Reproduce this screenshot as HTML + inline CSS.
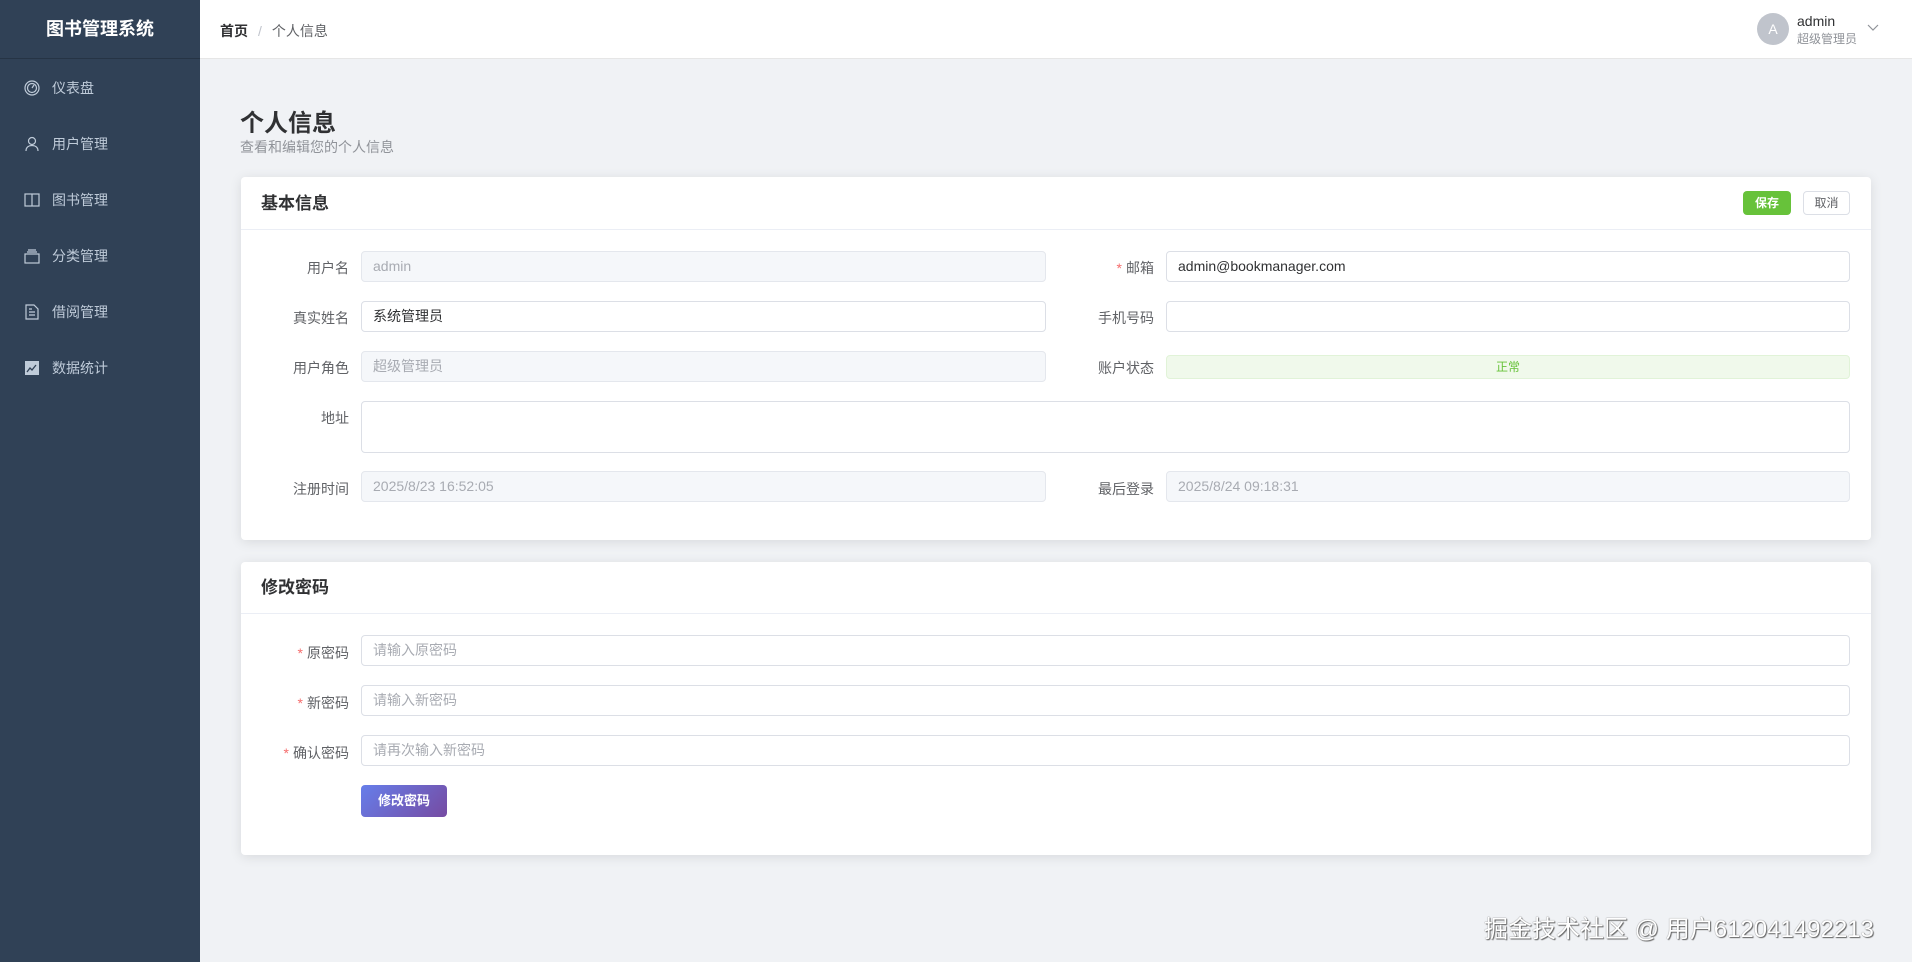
<!DOCTYPE html>
<html><head><meta charset="utf-8"><style>
*{box-sizing:border-box;margin:0;padding:0}
body{width:1912px;height:962px;overflow:hidden;background:#f0f2f5;font-family:"Liberation Sans","Noto Sans CJK SC",sans-serif;position:relative;color:#303133}
.side{position:absolute;left:0;top:0;width:200px;height:962px;background:#304156}
.logo{height:59px;border-bottom:1px solid #263445;color:#fff;font-weight:bold;font-size:18px;text-align:center;line-height:59px}
.mi{position:absolute;left:0;width:200px;height:56px;color:#bfcbd9;font-size:14px;line-height:56px;padding-left:52px}
.mi svg{position:absolute;left:24px;top:20px}
.hdr{position:absolute;left:200px;top:0;right:0;height:59px;background:#fff;border-bottom:1px solid #e6e6e6}
.bc{position:absolute;left:20px;top:21px;font-size:14px;color:#606266}
.bc b{color:#303133}
.av{position:absolute;left:1757px;top:13px;width:32px;height:32px;border-radius:50%;background:#c0c4cc;color:#fff;text-align:center;line-height:32px;font-size:14px}
.abs{position:absolute}
.card{position:absolute;left:241px;width:1630px;background:#fff;border-radius:4px;box-shadow:0 2px 12px rgba(0,0,0,.1)}
.ch{height:53px;border-bottom:1px solid #ebeef5;padding-left:20px;line-height:53px;font-size:17px;font-weight:bold;color:#303133}
.lbl{position:absolute;font-size:14px;color:#606266;text-align:right;width:120px}
.lbl i{color:#f56c6c;font-style:normal;margin-right:4px}
.inp{position:absolute;height:31px;border:1px solid #dcdfe6;border-radius:4px;background:#fff;font-size:14px;line-height:29px;padding-left:11px;color:#606266}
.dis{background:#f5f7fa;border-color:#e4e7ed;color:#a8abb2}
.ph{color:#a8abb2}
</style></head><body>
<div class="side">
<div class="logo">图书管理系统</div>
<div class="mi" style="top:60px"><svg width="16" height="16" viewBox="0 0 16 16" fill="none" stroke="#bfcbd9" stroke-width="1.2"><circle cx="8" cy="8" r="7"/><circle cx="8" cy="8" r="4.5"/><path d="M8 8 L10 5"/></svg>仪表盘</div>
<div class="mi" style="top:116px"><svg width="16" height="16" viewBox="0 0 16 16" fill="none" stroke="#bfcbd9" stroke-width="1.2"><circle cx="8" cy="5" r="3.5"/><path d="M2 15c0-4 3-5.5 6-5.5s6 1.5 6 5.5"/></svg>用户管理</div>
<div class="mi" style="top:172px"><svg width="16" height="16" viewBox="0 0 16 16" fill="none" stroke="#bfcbd9" stroke-width="1.2"><rect x="1" y="2" width="14" height="12"/><path d="M8 2v12"/></svg>图书管理</div>
<div class="mi" style="top:228px"><svg width="16" height="16" viewBox="0 0 16 16" fill="none" stroke="#bfcbd9" stroke-width="1.2"><rect x="1" y="6" width="14" height="9"/><path d="M3 4h10M4 2h8"/></svg>分类管理</div>
<div class="mi" style="top:284px"><svg width="16" height="16" viewBox="0 0 16 16" fill="none" stroke="#bfcbd9" stroke-width="1.2"><path d="M2 1h8l4 4v10H2z"/><path d="M5 8h6M5 11h6M5 5h3"/></svg>借阅管理</div>
<div class="mi" style="top:340px"><svg width="16" height="16" viewBox="0 0 16 16"><rect x="1" y="1" width="14" height="14" fill="#bfcbd9"/><path d="M3 12l3-4 2 2 4-5" stroke="#304156" stroke-width="1.3" fill="none"/></svg>数据统计</div>
</div>
<div class="hdr">
<div class="bc"><b>首页</b><span style="color:#c0c4cc;margin:0 10px">/</span>个人信息</div>
<div class="av" style="left:1557px">A</div>
<div class="abs" style="left:1597px;top:13px;font-size:14px;color:#303133">admin</div>
<div class="abs" style="left:1597px;top:30px;font-size:12px;color:#909399">超级管理员</div>
<svg class="abs" style="left:1667px;top:24px" width="12" height="8" viewBox="0 0 12 8"><path d="M1 1l5 5 5-5" stroke="#909399" fill="none" stroke-width="1.2"/></svg>
</div>
<div class="abs" style="left:240px;top:103px;font-size:24px;font-weight:bold;color:#303133">个人信息</div>
<div class="abs" style="left:240px;top:137px;font-size:14px;color:#909399">查看和编辑您的个人信息</div>

<div class="card" style="top:177px;height:363px">
<div class="ch">基本信息</div>
<div class="abs" style="left:1502px;top:14px;width:48px;height:24px;background:#67c23a;border-radius:4px;color:#fff;font-size:12px;font-weight:bold;text-align:center;line-height:24px">保存</div>
<div class="abs" style="left:1562px;top:14px;width:47px;height:24px;border:1px solid #dcdfe6;border-radius:4px;color:#606266;font-size:12px;text-align:center;line-height:22px">取消</div>
</div>
<div class="lbl" style="left:229px;top:258px">用户名</div>
<div class="inp dis" style="left:361px;top:251px;width:685px">admin</div>
<div class="lbl" style="left:229px;top:308px">真实姓名</div>
<div class="inp" style="left:361px;top:301px;width:685px;color:#303133">系统管理员</div>
<div class="lbl" style="left:229px;top:358px">用户角色</div>
<div class="inp dis" style="left:361px;top:351px;width:685px">超级管理员</div>
<div class="lbl" style="left:229px;top:408px">地址</div>
<div class="inp" style="left:361px;top:401px;width:1489px;height:52px"></div>
<div class="lbl" style="left:229px;top:479px">注册时间</div>
<div class="inp dis" style="left:361px;top:471px;width:685px">2025/8/23 16:52:05</div>
<div class="lbl" style="left:1034px;top:258px"><i>*</i>邮箱</div>
<div class="inp" style="left:1166px;top:251px;width:684px;color:#303133">admin@bookmanager.com</div>
<div class="lbl" style="left:1034px;top:308px">手机号码</div>
<div class="inp" style="left:1166px;top:301px;width:684px"></div>
<div class="lbl" style="left:1034px;top:358px">账户状态</div>
<div class="abs" style="left:1166px;top:355px;width:684px;height:24px;background:#f0f9eb;border:1px solid #e1f3d8;border-radius:4px;color:#67c23a;font-size:12px;text-align:center;line-height:22px">正常</div>
<div class="lbl" style="left:1034px;top:479px">最后登录</div>
<div class="inp dis" style="left:1166px;top:471px;width:684px">2025/8/24 09:18:31</div>

<div class="card" style="top:562px;height:293px">
<div class="ch" style="height:52px;line-height:52px">修改密码</div>
</div>
<div class="lbl" style="left:229px;top:643px"><i>*</i>原密码</div>
<div class="inp ph" style="left:361px;top:635px;width:1489px">请输入原密码</div>
<div class="lbl" style="left:229px;top:693px"><i>*</i>新密码</div>
<div class="inp ph" style="left:361px;top:685px;width:1489px">请输入新密码</div>
<div class="lbl" style="left:229px;top:743px"><i>*</i>确认密码</div>
<div class="inp ph" style="left:361px;top:735px;width:1489px">请再次输入新密码</div>
<div class="abs" style="left:361px;top:785px;width:86px;height:32px;border-radius:4px;background:linear-gradient(135deg,#667eea,#764ba2);color:#fff;font-size:13px;font-weight:bold;text-align:center;line-height:32px">修改密码</div>

<div class="abs" style="left:1484px;top:909px;font-size:24px;color:#fff;text-shadow:0 0 1px #555,1px 1px 1px #666;white-space:nowrap">掘金技术社区 @ 用户612041492213</div>
</body></html>
